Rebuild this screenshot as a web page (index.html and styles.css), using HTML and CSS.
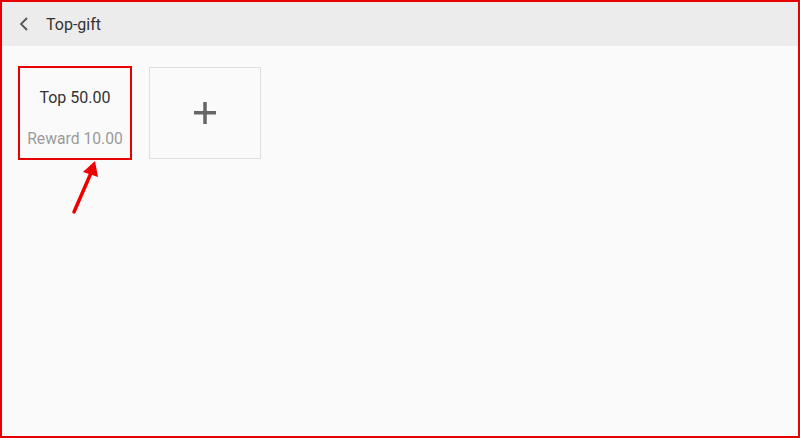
FILE: index.html
```html
<!DOCTYPE html>
<html lang="en">
<head>
  <meta charset="UTF-8">
  <meta name="viewport" content="width=device-width, initial-scale=1.0">
  <title>Top-gift</title>
  <link rel="stylesheet" href="styles.css">
</head>
<body>
  <div class="app">
    <div class="header">
      <button class="back-btn">
        <svg width="10" height="14" viewBox="0 0 10 14">
          <path d="M8 1 L2 7 L8 13" fill="none" stroke="#555" stroke-width="1.8"/>
        </svg>
      </button>
      <div class="title">Top-gift</div>
    </div>
    <div class="content">
      <div class="card selected">
        <div class="card-top">Top 50.00</div>
        <div class="card-reward">Reward 10.00</div>
        <svg class="pointer" width="40" height="60" viewBox="0 0 40 60">
          <path d="M6 54 L23 15" stroke="#e00" stroke-width="3.5" stroke-linecap="round"/>
          <path d="M27 3 L15 14 L30 19 Z" fill="#e00"/>
        </svg>
      </div>
      <div class="card add-card">
        <svg width="24" height="24" viewBox="0 0 24 24">
          <rect x="1" y="10" width="22" height="3.5" fill="#666"/>
          <rect x="10.25" y="1" width="3.5" height="22" fill="#666"/>
        </svg>
      </div>
    </div>
  </div>
</body>
</html>
```

FILE: styles.css
```css
body {
  margin: 0;
  font-family: Roboto, "Noto Sans", sans-serif;
  background: #fafafa;
}
.app {
  width: 800px;
  height: 438px;
  box-sizing: border-box;
  border: 2px solid #e60000;
  background: #fafafa;
  display: flex;
  flex-direction: column;
}
.header {
  height: 44px;
  background: #ececec;
  display: flex;
  align-items: center;
  flex-shrink: 0;
}
.back-btn {
  background: none;
  border: none;
  padding: 0;
  margin-left: 17px;
  width: 12px;
  height: 16px;
  display: flex;
  align-items: center;
  cursor: pointer;
}
.title {
  margin-left: 15px;
  font-size: 16px;
  color: #333;
}
.content {
  display: flex;
  gap: 18px;
  padding: 21px 17px;
  align-items: flex-start;
}
.card {
  width: 112px;
  height: 92px;
  box-sizing: border-box;
  border: 1px solid #dedede;
  background: #fafafa;
  display: flex;
  flex-direction: column;
  align-items: center;
}
.card.selected {
  position: relative;
  outline: 2px solid #e60000;
  outline-offset: -1px;
  padding-top: 20px;
  gap: 21px;
}
.card-top {
  font-size: 16px;
  line-height: 20px;
  color: #333;
}
.card-reward {
  font-size: 15.7px;
  line-height: 20px;
  color: #9a9a9a;
}
.pointer {
  position: absolute;
  left: 48px;
  top: 90px;
}
.add-card {
  justify-content: center;
}
```
